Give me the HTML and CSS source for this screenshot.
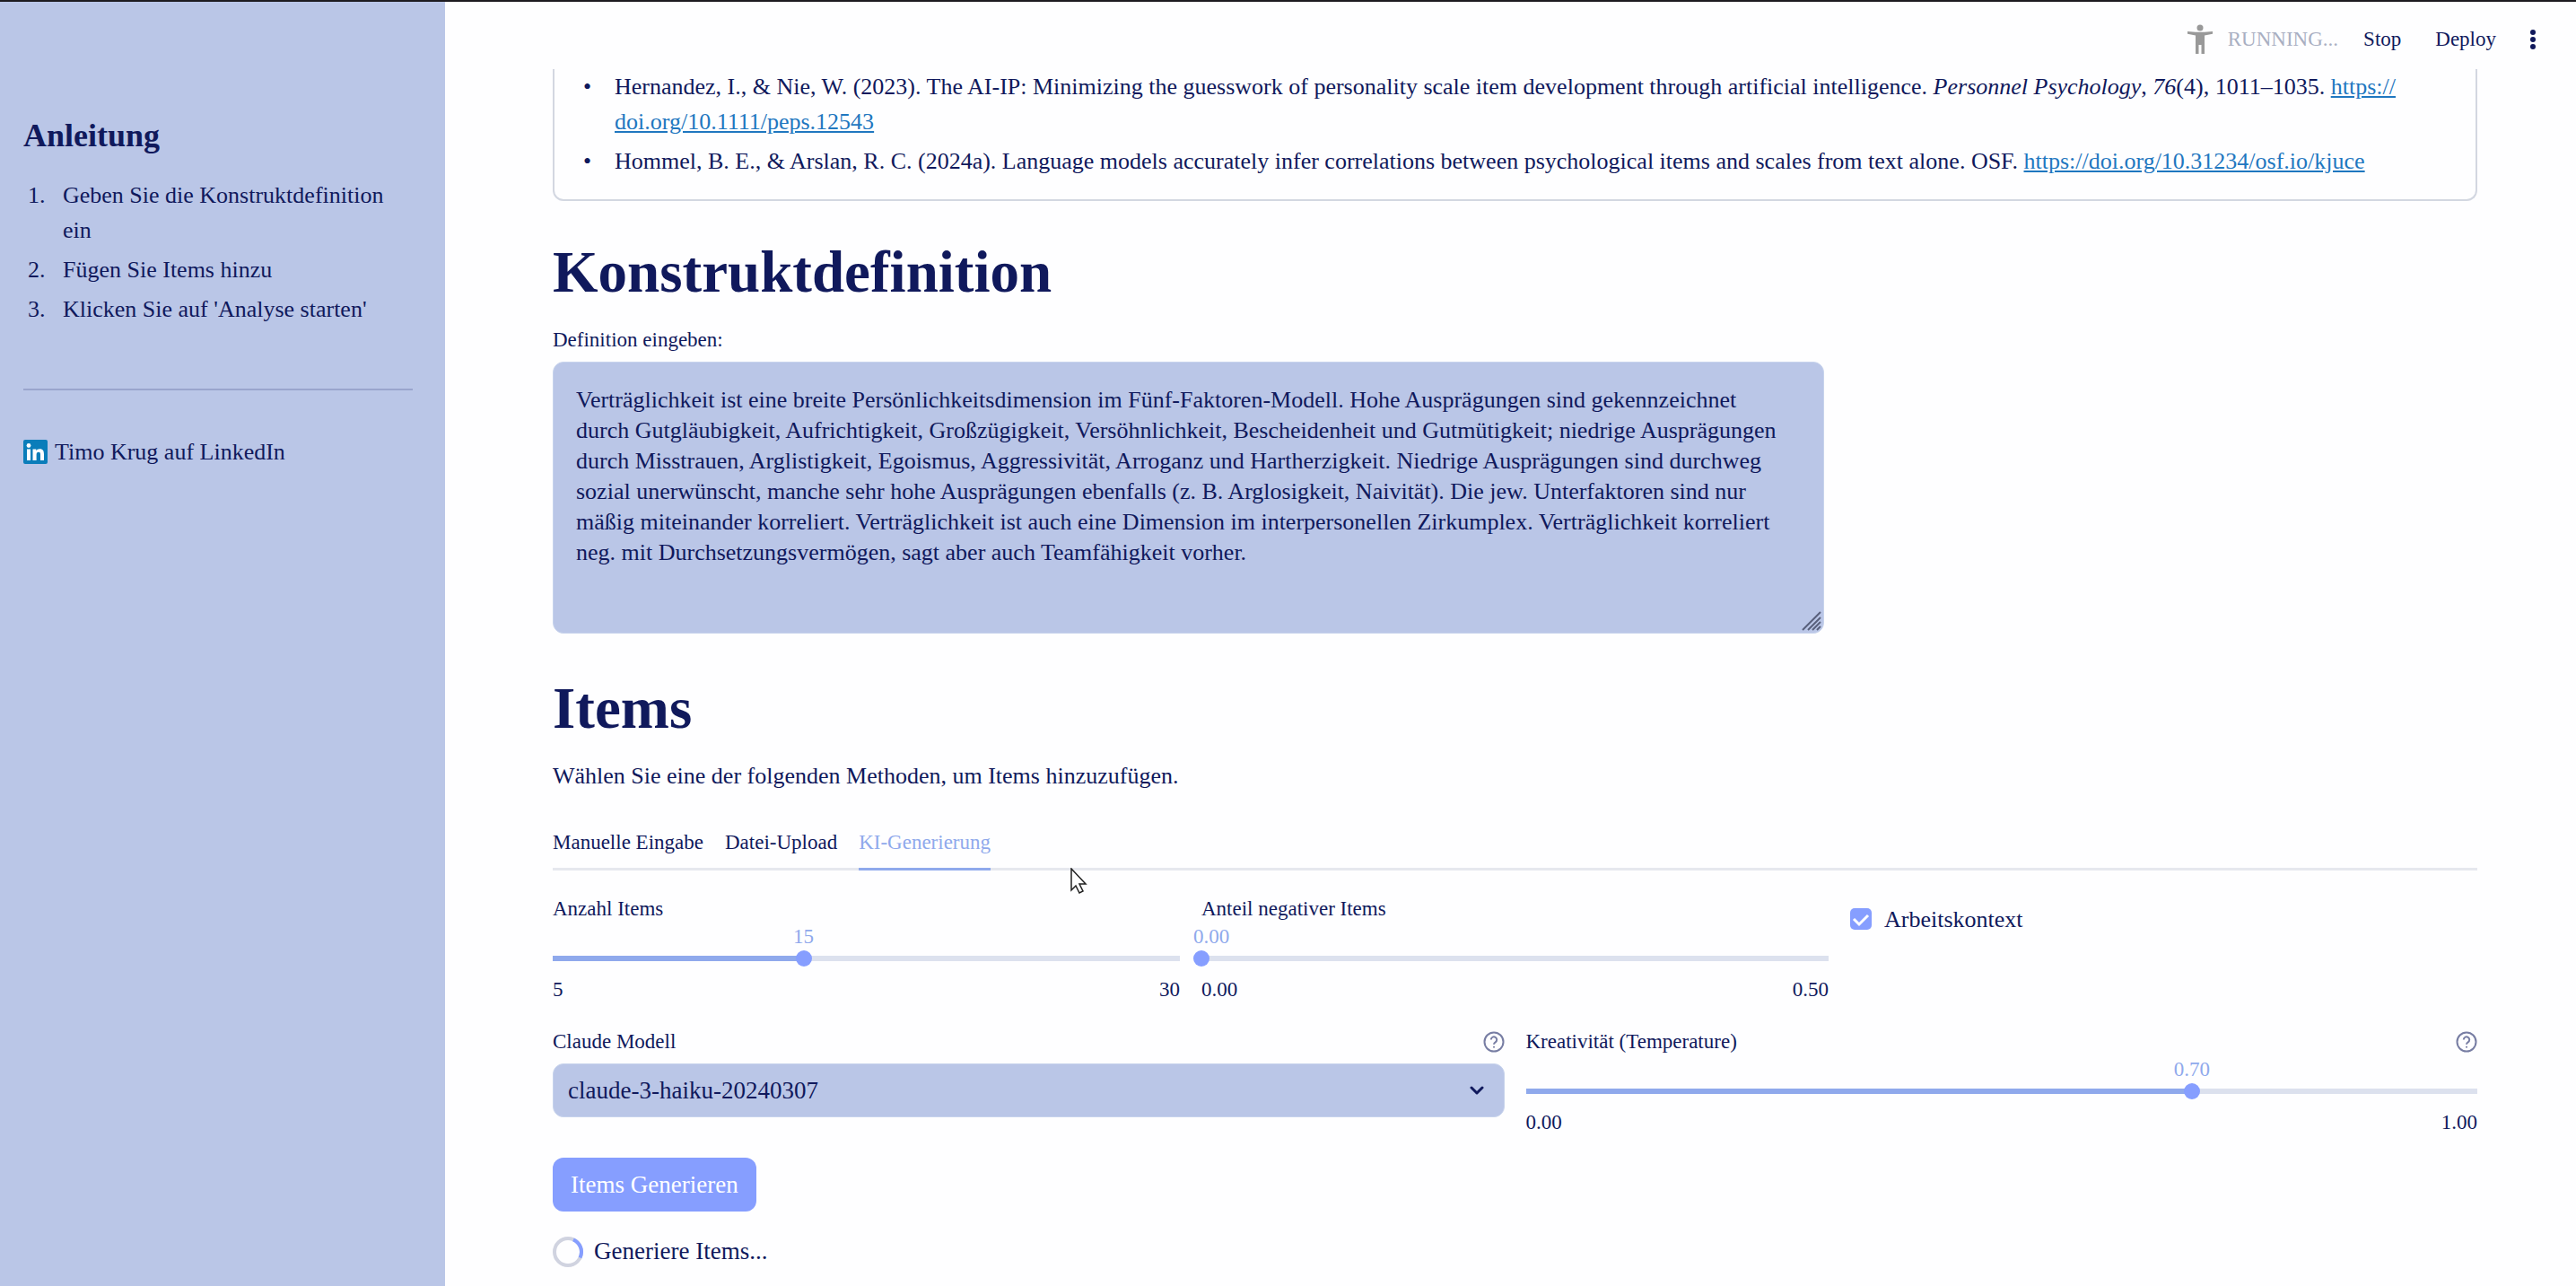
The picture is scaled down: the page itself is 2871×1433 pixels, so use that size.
FILE: index.html
```html
<!DOCTYPE html>
<html lang="de">
<head>
<meta charset="utf-8">
<meta name="viewport" content="width=device-width, initial-scale=1">
<title>Itemanalyse</title>
<link rel="stylesheet" href="styles.css">
</head>
<body>
<div class="app">
  <aside class="sidebar">
    <h2 class="sidebar-title">Anleitung</h2>
    <ol class="steps">
      <li>Geben Sie die Konstruktdefinition ein</li>
      <li>Fügen Sie Items hinzu</li>
      <li>Klicken Sie auf 'Analyse starten'</li>
    </ol>
    <hr class="divider">
    <a class="linkedin" href="#">
      <svg class="linkedin-icon" viewBox="0 0 27 27" aria-hidden="true">
        <rect width="27" height="27" rx="2" fill="#0a7dba"/>
        <g fill="#fff"><circle cx="6" cy="6.5" r="2.4"/><rect x="4" y="10.500" width="4" height="12.500"/><path d="M10.500 10.500h3.800v1.700c.6-1.100 1.900-2 3.900-2 4 0 4.800 2.600 4.800 6v6.800h-4v-6c0-1.500 0-3.300-2-3.300s-2.400 1.600-2.400 3.200v6.100h-4.100z"/></g>
      </svg>
      <span>Timo Krug auf LinkedIn</span>
    </a>
  </aside>

  <div class="page">
    <header class="toolbar">
      <div class="status">
        <svg class="status-icon" viewBox="0 0 30 34" aria-hidden="true" fill="#999">
          <circle cx="15" cy="4" r="3.500"/><path d="M1 8l9 .8h10L29 8v2.800L20 12.500V33h-3.500v-10h-3v10H10V12.500L1 10.800z"/>
        </svg>
        <span>RUNNING...</span>
      </div>
      <button class="toolbar-button" type="button">Stop</button>
      <button class="toolbar-button deploy" type="button">Deploy</button>
      <button class="menu-button" type="button" aria-label="Menü">
        <svg viewBox="0 0 6 22" aria-hidden="true" fill="#10195c"><circle cx="3" cy="3" r="3"/><circle cx="3" cy="11" r="3"/><circle cx="3" cy="19" r="3"/></svg>
      </button>
    </header>

    <main class="content">
      <section class="references">
        <ul class="reference-list">
          <li>Hernandez, I., &amp; Nie, W. (2023). The AI-IP: Minimizing the guesswork of personality scale item development through artificial intelligence. <em>Personnel Psychology</em>, <em>76</em>(4), 1011–1035. <a href="#">https://<wbr>doi.org/10.1111/peps.12543</a></li>
          <li>Hommel, B. E., &amp; Arslan, R. C. (2024a). Language models accurately infer correlations between psychological items and scales from text alone. OSF. <a href="#">https://doi.org/10.31234/osf.io/kjuce</a></li>
        </ul>
      </section>

      <h1 class="heading">Konstruktdefinition</h1>
      <div class="definition">
        <div class="field">
          <label class="label" for="definition">Definition eingeben:</label>
          <div class="textarea-wrap">
            <textarea class="textarea" id="definition">Verträglichkeit ist eine breite Persönlichkeitsdimension im Fünf-Faktoren-Modell. Hohe Ausprägungen sind gekennzeichnet durch Gutgläubigkeit, Aufrichtigkeit, Großzügigkeit, Versöhnlichkeit, Bescheidenheit und Gutmütigkeit; niedrige Ausprägungen durch Misstrauen, Arglistigkeit, Egoismus, Aggressivität, Arroganz und Hartherzigkeit. Niedrige Ausprägungen sind durchweg sozial unerwünscht, manche sehr hohe Ausprägungen ebenfalls (z. B. Arglosigkeit, Naivität). Die jew. Unterfaktoren sind nur mäßig miteinander korreliert. Verträglichkeit ist auch eine Dimension im interpersonellen Zirkumplex. Verträglichkeit korreliert neg. mit Durchsetzungsvermögen, sagt aber auch Teamfähigkeit vorher.</textarea>
            <svg class="grip" viewBox="0 0 22 22" aria-hidden="true" fill="none" stroke="#59607c" stroke-width="2"><path d="M1 21L21 1M7 21L21 7M12 21l9-9M17 21l4-4"/></svg>
          </div>
        </div>
      </div>

      <h1 class="heading">Items</h1>
      <p class="intro">Wählen Sie eine der folgenden Methoden, um Items hinzuzufügen.</p>

      <div class="tabs" role="tablist">
        <button class="tab" type="button" role="tab">Manuelle Eingabe</button>
        <button class="tab" type="button" role="tab">Datei-Upload</button>
        <button class="tab active" type="button" role="tab" aria-selected="true">KI-Generierung</button>
        <svg class="cursor" viewBox="0 0 19 29" aria-hidden="true"><path d="M1 1v24l5-5 4 8 4-2-4-8h7z" fill="#fff" stroke="#222" stroke-width="1.500"/></svg>
      </div>

      <div class="columns three">
        <div class="field">
          <label class="label" for="count">Anzahl Items</label>
          <div class="slider" style="--pos: 40%">
            <output class="slider-value" for="count">15</output>
            <input class="range" id="count" type="range" min="5" max="30" value="15">
          </div>
          <div class="limits"><span>5</span><span>30</span></div>
        </div>
        <div class="field">
          <label class="label" for="negative">Anteil negativer Items</label>
          <div class="slider" style="--pos: 0%">
            <output class="slider-value at-start" for="negative">0.00</output>
            <input class="range" id="negative" type="range" min="0" max="0.5" step="0.01" value="0">
          </div>
          <div class="limits"><span>0.00</span><span>0.50</span></div>
        </div>
        <label class="check"><input class="checkbox" type="checkbox" checked><span>Arbeitskontext</span></label>
      </div>

      <div class="columns two">
        <div class="field">
          <div class="label-row">
            <label class="label" for="model">Claude Modell</label>
            <svg class="help" viewBox="0 0 24 24" aria-hidden="true"><circle cx="12" cy="12" r="10.500"/><path d="M8.800 9.500a3.200 3.200 0 1 1 4.800 2.800c-1.200.7-1.600 1.200-1.600 2.400M12 17v1.500"/></svg>
          </div>
          <div class="select-wrap">
            <select class="select" id="model"><option>claude-3-haiku-20240307</option></select>
            <svg class="chevron" viewBox="0 0 16 11" aria-hidden="true"><path d="M2 2l6 6 6-6" fill="none" stroke="#10195c" stroke-width="3" stroke-linecap="round" stroke-linejoin="round"/></svg>
          </div>
        </div>
        <div class="field">
          <div class="label-row">
            <label class="label" for="temperature">Kreativität (Temperature)</label>
            <svg class="help" viewBox="0 0 24 24" aria-hidden="true"><circle cx="12" cy="12" r="10.500"/><path d="M8.800 9.500a3.200 3.200 0 1 1 4.800 2.800c-1.200.7-1.600 1.200-1.600 2.400M12 17v1.500"/></svg>
          </div>
          <div class="slider" style="--pos: 70%">
            <output class="slider-value" for="temperature">0.70</output>
            <input class="range" id="temperature" type="range" min="0" max="1" step="0.01" value="0.7">
          </div>
          <div class="limits"><span>0.00</span><span>1.00</span></div>
        </div>
      </div>

      <button class="primary" type="button">Items Generieren</button>
      <div class="spinner-row" role="status">
        <svg class="spinner" viewBox="0 0 34 34" aria-hidden="true" fill="none" stroke-width="4"><circle cx="17" cy="17" r="15" stroke="#d0d3e0"/><path d="M23 3.300A15 15 0 0 1 30.500 23.500" stroke="#869eff"/></svg>
        <span>Generiere Items...</span>
      </div>
    </main>
  </div>
</div>
</body>
</html>
```
FILE: styles.css
```css
:root {
  --ink: #10195c;
  --panel: #bac6e7;
  --primary: #869eff;
  --accent: #8fa9ec;
  --track: #dce1ee;
}

* { box-sizing: border-box; }

body {
  margin: 0;
  color: var(--ink);
  background: #fefeff;
  font-family: Georgia, "Liberation Serif", serif;
  font-size: 26px;
  line-height: 39px;
}

button, textarea, select, input { font: inherit; color: inherit; }

.app {
  display: grid;
  grid-template-columns: 496px 1fr;
  height: 100vh;
  overflow: hidden;
  border-top: 2px solid #1d1b20;
}

.sidebar {
  padding: 130px 36px 0 26px;
  background: var(--panel);
}

.sidebar-title { margin: 0; font-size: 36px; line-height: 39px; }

.steps {
  display: grid;
  gap: 5px;
  margin: 27px 0 0;
  padding: 0 0 0 44px;
}

.steps li::marker { content: counter(list-item) ".\2002\2005"; }

.divider {
  width: 100%;
  height: 2px;
  margin: 69px 0 49px;
  border: 0;
  background: #9aa5cd;
}

.linkedin {
  display: flex;
  align-items: center;
  gap: 8px;
  color: inherit;
  text-decoration: none;
}

.linkedin-icon { width: 27px; height: 27px; }

.page { min-width: 0; }

.toolbar {
  display: flex;
  align-items: center;
  justify-content: flex-end;
  height: 75px;
  padding: 8px 45px 0 0;
  font-size: 23px;
}

.status { display: flex; align-items: center; gap: 16px; margin-right: 28px; color: #a9afc2; }
.status-icon { width: 30px; height: 34px; }

.toolbar-button, .menu-button { padding: 0; border: 0; background: none; }
.deploy { margin: 0 38px; }
.menu-button { display: flex; }
.menu-button svg { width: 6px; height: 22px; }

.content { padding: 0 110px 0 120px; }

.references {
  padding: 0 40px 23px 26px;
  border: 2px solid #d3d7e1;
  border-top: 0;
  border-radius: 0 0 12px 12px;
}

.reference-list {
  display: grid;
  gap: 5px;
  margin: 0;
  padding-left: 41px;
}

.reference-list li::marker { content: "•\2003"; }

.reference-list a { color: #1f77c0; }

.heading {
  margin: 46px 0 0;
  font-size: 65px;
  line-height: 66px;
}

.definition { display: grid; grid-template-columns: 2fr 1fr; gap: 20px; margin: 27px 0 50px; }

.field { min-width: 0; }
.label { display: block; font-size: 23px; line-height: 32px; }
.label-row { display: flex; align-items: center; justify-content: space-between; }

.textarea-wrap { position: relative; margin-top: 8px; }

.textarea {
  display: block;
  width: 100%;
  height: 303px;
  padding: 25px 40px 25px 25px;
  border: 1px solid #c7d3ec;
  border-radius: 12px;
  background: var(--panel);
  line-height: 34px;
  resize: none;
  overflow: hidden;
}

.grip { position: absolute; right: 3px; bottom: 3px; width: 22px; height: 22px; }

.intro { margin: 23px 0 0; }

.tabs {
  position: relative;
  display: flex;
  gap: 24px;
  margin-top: 26px;
  border-bottom: 3px solid #e6e8ee;
}

.tab {
  height: 60px;
  margin-bottom: -3px;
  padding: 0;
  border: 0;
  border-bottom: 3px solid transparent;
  background: none;
  font-size: 23px;
}

.tab.active { color: var(--accent); border-color: var(--accent); }

.cursor { position: absolute; left: 577px; top: 57px; width: 19px; height: 29px; }

.columns { display: grid; gap: 24px; }
.three { grid-template-columns: repeat(3, 1fr); margin-top: 27px; }
.two { grid-template-columns: repeat(2, 1fr); margin-top: 26px; }

.slider { position: relative; padding-top: 30px; font-size: 23px; }

.slider-value {
  position: absolute;
  left: var(--pos);
  top: 0;
  transform: translateX(-50%);
  color: var(--accent);
  line-height: 30px;
}

.slider-value.at-start { left: -9px; transform: none; }

.range {
  display: block;
  width: calc(100% + 18px);
  height: 18px;
  margin: 0 -9px;
  appearance: none;
  background: linear-gradient(to right, var(--accent) var(--pos), var(--track) var(--pos)) center / calc(100% - 18px) 6px no-repeat;
}

.range::-webkit-slider-thumb {
  appearance: none;
  width: 18px;
  height: 18px;
  border-radius: 50%;
  background: var(--primary);
}

.limits { display: flex; justify-content: space-between; margin-top: 10px; font-size: 23px; line-height: 32px; }

.check { display: flex; align-items: center; gap: 14px; height: 30px; margin-top: 12px; }

.checkbox {
  width: 24px;
  height: 24px;
  margin: 0;
  appearance: none;
  border-radius: 5px;
  background: var(--primary) url("data:image/svg+xml,%3Csvg xmlns='http://www.w3.org/2000/svg' viewBox='0 0 24 24'%3E%3Cpath d='M4 12l6 6L20 8' fill='none' stroke='white' stroke-width='3'/%3E%3C/svg%3E") center / 100% no-repeat;
}

.help { width: 24px; height: 24px; fill: none; stroke: #777da3; stroke-width: 2; }

.select-wrap { position: relative; margin-top: 8px; }

.select {
  display: block;
  width: 100%;
  height: 60px;
  padding: 0 16px;
  border: 1px solid #c7d3ec;
  border-radius: 12px;
  background: var(--panel);
  font-size: 27px;
  appearance: none;
}

.chevron { position: absolute; right: 23px; top: 25px; width: 16px; height: 11px; }

.primary {
  display: block;
  height: 60px;
  margin-top: 23px;
  padding: 0 20px;
  border: 0;
  border-radius: 12px;
  background: var(--primary);
  color: #fff;
  font-size: 27px;
}

.spinner-row { display: flex; align-items: center; gap: 12px; margin-top: 25px; font-size: 27px; }
.spinner { width: 34px; height: 34px; }
```
